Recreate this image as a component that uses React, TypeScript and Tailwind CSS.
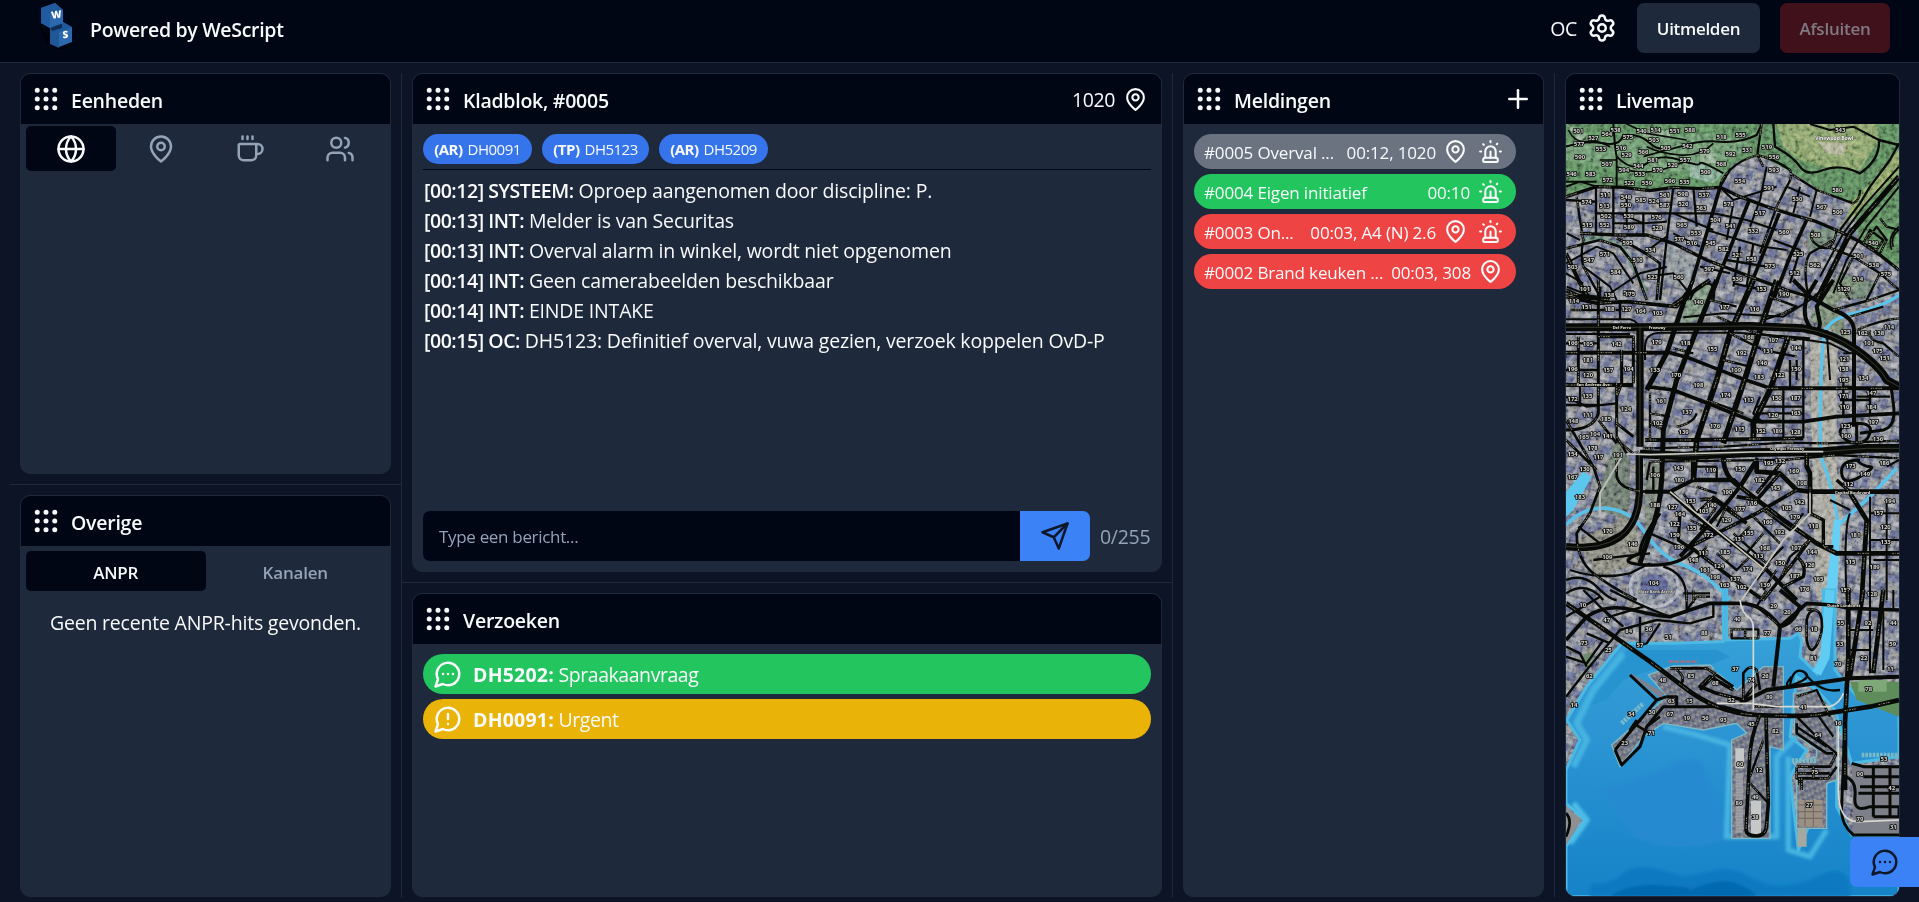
import React from "react";
import { Coffee, Globe, Grip, Plus, Settings, Siren, Users } from "lucide-react";

type IconProps = { size: number; className?: string; children?: React.ReactNode };

function Stroke({ size, className = "", children }: IconProps) {
  return (
    <svg width={size} height={size} viewBox="0 0 24 24" fill="none" stroke="currentColor" strokeWidth="2" strokeLinecap="round" strokeLinejoin="round" className={`shrink-0 ${className}`}>
      {children}
    </svg>
  );
}

const Pin = ({ size, className }: IconProps) => (
  <Stroke size={size} className={className}>
    <path d="M20 10c0 6-8 12-8 12s-8-6-8-12a8 8 0 0 1 16 0Z" />
    <circle cx="12" cy="10" r="3" />
  </Stroke>
);

const BubbleDots = ({ size, className }: IconProps) => (
  <Stroke size={size} className={className}>
    <path d="M7.9 20A9 9 0 1 0 4 16.1L2 22Z" />
    <path d="M8 12h.01M12 12h.01M16 12h.01" />
  </Stroke>
);

const BubbleAlert = ({ size, className }: IconProps) => (
  <Stroke size={size} className={className}>
    <path d="M7.9 20A9 9 0 1 0 4 16.1L2 22Z" />
    <path d="M12 8v4M12 16h.01" />
  </Stroke>
);

const Paper = ({ size, className }: IconProps) => (
  <Stroke size={size} className={className}>
    <path d="m22 2-7 20-4-9-9-4Z" />
    <path d="M22 2 11 13" />
  </Stroke>
);

function Logo() {
  return (
    <svg width="36" height="50" viewBox="0 0 36 50" className="shrink-0">
      <path d="M2 28l8 6 14-3 9 12-12 7-12-6z" fill="#000" opacity=".55" />
      <path d="M12 26l13-4 9 5v15l-13 5-9-4z" fill="#2b68ad" />
      <path d="M12 26l9 4v18l-9-4z" fill="#1f5696" />
      <path d="M14 27l11-5 9 6-13 4z" fill="#20599b" />
      <path d="M12 26l12-2v4l-10 3z" fill="#0c2344" opacity=".8" />
      <path d="M3 8L17 3l8 7v13l-13 5-9-5z" fill="#2b68ad" />
      <path d="M3 8l9 3v17l-9-5z" fill="#205a9f" />
      <path d="M3 8L17 3l8 7-13 3z" fill="#215a9c" />
      <text x="18.5" y="18" fontSize="10" fontWeight="800" fill="#fff" textAnchor="middle" transform="rotate(-8 18.5 15)" className="font-['Open_Sans',sans-serif]">W</text>
      <text x="27.5" y="38" fontSize="10" fontWeight="800" fill="#fff" textAnchor="middle" transform="rotate(-4 27.5 35)" className="font-['Open_Sans',sans-serif]">S</text>
    </svg>
  );
}

function Panel({ title, right, className = "", children }: { title: string; right?: React.ReactNode; className?: string; children?: React.ReactNode }) {
  return (
    <section className={`flex flex-col overflow-hidden rounded-[10px] border border-[#1e293b] bg-[#1e293b] ${className}`}>
      <header className="flex h-[50px] shrink-0 items-center bg-[#010615] pl-[10px] pr-[10px]">
        <Grip size={30} className="shrink-0" />
        <h2 className="ml-[10px] pt-[3px] text-[19.5px] font-semibold tracking-[-0.25px]">{title}</h2>
        <div className="ml-auto flex items-center">{right}</div>
      </header>
      {children}
    </section>
  );
}

const units = [["(AR)", "DH0091", "w-[109px]"], ["(TP)", "DH5123", "w-[107px]"], ["(AR)", "DH5209", "w-[109px]"]];

const log = [
  ["[00:12] SYSTEEM:", "Oproep aangenomen door discipline: P."],
  ["[00:13] INT:", "Melder is van Securitas"],
  ["[00:13] INT:", "Overval alarm in winkel, wordt niet opgenomen"],
  ["[00:14] INT:", "Geen camerabeelden beschikbaar"],
  ["[00:14] INT:", "EINDE INTAKE"],
  ["[00:15] OC:", "DH5123: Definitief overval, vuwa gezien, verzoek koppelen OvD-P"],
];

const calls = [
  { title: "#0005 Overval ...", info: "00:12, 1020", bg: "bg-[#6b7280]", pin: true, siren: true },
  { title: "#0004 Eigen initiatief", info: "00:10", bg: "bg-[#22c55e]", pin: false, siren: true },
  { title: "#0003 On...", info: "00:03, A4 (N) 2.6", bg: "bg-[#ef4444]", pin: true, siren: true },
  { title: "#0002 Brand keuken ...", info: "00:03, 308", bg: "bg-[#ef4444]", pin: true, siren: false },
];

/* Map road data: "width|path" */
const northRoads = [
  "8|M198 590L290 560L370 562L450 572L520 562L600 566L660 562L720 590L800 620L880 645L950 665L1020 695L1080 725L1140 765L1197 810",
  "4|M198 440Q260 420 310 430T370 405Q420 400 450 430T540 440T660 425T770 405L785 372",
  "4|M340 372Q345 450 350 470L350 560",
  "4|M350 470Q400 520 440 490T540 480T600 490T670 520",
  "3|M205 390Q225 430 260 425T330 440M440 440Q480 460 540 465T640 430M380 372L440 400L560 420",
  "3|M350 500Q430 530 500 505T570 480M300 480H350M430 470L500 450",
  "5|M785 372L772 465L790 500M772 465Q720 480 690 510T660 562",
  "5|M820 372L825 440Q880 470 900 500Q920 530 970 510T1080 520Q1140 480 1137 420L1197 435",
  "5|M772 465Q830 480 870 510Q880 530 860 560L830 620L780 760M870 520L950 570L1060 610Q1080 600 1080 570",
  "5|M1197 430L1170 480L1110 560L1080 610L1020 690",
  "14|M1197 530L1110 630L1050 700L1000 800L950 900",
  "4|M1197 500L1090 620L1030 700L960 830M1197 560L1100 680L1040 780L1000 880",
  "4|M930 372L990 390L1060 380L1137 420",
  "5|M288 562V700M288 605L198 600M288 640H640M340 562V700M430 640V710M520 562L500 720L480 900M580 562L590 680",
  "8|M240 700L350 705L440 705L520 730L620 780L750 830L860 870L960 900",
  "9|M660 562L620 700L590 800L560 900M748 600L700 720L660 820L630 900M838 640L790 760L750 860L735 900M920 660L870 770L820 900",
  "5|M230 590L240 660L250 720Q240 770 250 800L300 890",
  "4|M640 640L740 660L830 690M620 690L720 720L790 740L860 750M600 800L690 820M690 510L660 562L700 600L830 560M800 500L780 600L750 680M700 610L680 720M860 560L930 590M950 570L930 650M900 560L880 640",
  "6|M198 745L300 720L360 740L400 790L440 900M350 715Q420 745 480 790L470 900",
  "4|M198 790L290 740L340 760L400 850M200 860L300 900L420 820L500 800M250 800L330 860L350 900M430 760L500 710M440 830L520 820L560 870M198 820L250 850",
  "10|M198 870L240 890L330 900M198 760L240 850L270 900",
  "5|M570 900Q590 850 620 850T640 900M680 780L800 800M700 850L790 870M720 740L700 860M760 730L740 860M820 720L900 750L870 850",
  "5|M940 690Q920 720 960 740T1010 690M1000 720L930 760Q910 790 920 860L930 900M980 740L1060 770L1140 820L1197 870M1060 770L1020 850L1050 900M1140 820L1100 900M1100 720L1130 680L1160 720L1140 760M1090 730L1110 690L1150 720L1130 750L1090 730M1140 655L1160 680L1197 690",
  "3|M1197 690Q1170 710 1180 740M1197 680Q1160 710 1175 750",
  "4|M198 560L240 545L290 560M200 700L240 720M198 545L290 545M380 590V690M360 640L430 670L500 665M340 670H430M520 640L640 690M520 700L600 740",
];

const midRoads = [
  "9|M48 50L140 70L230 65L380 80L410 40L430 0",
  "22|M48 142H250L400 140L600 138L760 145Q850 160 920 210T1010 300L1047 320",
  "4|M48 118H240Q270 125 270 160M400 112L520 100L700 110L780 60L850 0M48 162H240M285 240V200Q285 160 330 158H560L780 175M700 170L840 190L900 220",
  "10|M800 0L770 50Q755 110 780 140T810 130L800 80L850 0M730 0L780 50L850 90Q910 110 912 150V440",
  "5|M850 90L960 60L1047 30M920 150Q990 120 1047 115M960 150Q950 180 1000 190L1047 230M900 110L1000 80",
  "13|M500 0L380 300L340 450L335 600Q330 690 300 760L270 850M410 40L350 220L290 330",
  "15|M610 0L540 160L500 300L440 480L430 600M680 0L640 120L590 280L520 490M715 170L660 330L610 430V480",
  "9|M350 215L420 235L560 290L660 325L760 325M290 320L370 330L500 380L610 425L760 425L860 410L1047 400",
  "10|M48 218H350M48 315H250M650 325H1047M285 480L420 480L760 475M370 75L480 0",
  "20|M270 140V500M268 520V640Q265 730 210 770T48 800",
  "7|M145 0V400Q130 450 48 450M85 170V310M200 310V430L250 470M145 170H250V310M215 210V310L200 350",
  "24|M270 522L400 528L600 518L820 515L950 505L1047 505",
  "5|M280 505L520 500L700 488L830 490L1047 482M300 545L520 542L700 540L860 525L1047 535M250 520L200 480V420",
  "12|M430 520V600H550L570 620L620 540V575L690 580L740 630L780 635H1047M520 530Q520 590 570 620",
  "12|M770 520V560L780 580V700M570 620L700 720L800 790L860 820H1047M900 640L950 720L935 960",
  "10|M285 635H360L430 600M360 635L430 700L640 860L740 960M570 620L480 730L390 830",
  "9|M740 630L620 700L480 770L420 800L540 890L640 960M690 580L620 660L560 650M450 660Q490 650 520 680L590 730",
  "8|M390 700L385 780L430 810Q390 860 290 855T270 820Q270 780 330 700",
  "6|M200 540V590Q210 630 285 635M200 470L230 520M145 420L200 490M48 420L130 560L150 620L120 700L80 760Q80 840 130 880T260 960M48 480L140 570",
  "7|M930 540Q870 540 875 580T930 590T960 560T920 540M870 460Q870 430 920 430T960 460T920 490T870 460M920 430V500M1020 300L1030 370Q1040 440 1000 450L930 460",
  "8|M640 960L720 860L780 780M740 830Q770 850 760 890L700 920M780 700L820 720V800L850 800M905 640L860 600M700 540L620 640",
  "5|M48 350L110 380L200 370M90 320V380M48 375H150M150 60V20M210 60V120M48 190H145M48 270H145M300 545L290 600M310 560V640M430 560H500M500 560V600M720 240V325M740 240V300M760 180V475M620 380H760M700 325V475M620 400H760M880 290V410M960 325V400M920 350H1020M870 360H960M630 350L610 400L640 430",
  "5|M48 40L140 50M60 90H210V60M660 50L740 80L700 100L640 120M480 60L560 80M500 110L620 160L740 180M370 205L430 220M300 340V480M300 400L360 410M380 440Q430 430 440 400M470 360L580 400M540 160L640 210L740 230M520 240L600 260M300 430L340 450",
  "4|M960 650V960M1010 660V960M960 700H1047M900 700Q880 740 890 960M960 780H1047M970 840H1047M1010 560L1047 540M840 660L900 690M830 150L840 300M880 220H910M880 320H910",
  "5|M400 640L440 700L490 650L560 700M440 620L500 640M420 720L500 760M500 680L450 750M530 680L500 740M600 700L690 790M640 690L720 750L760 700M550 760L650 850L700 800M600 740L540 800M640 760L590 820M500 820L560 870L600 830M470 800L430 850M660 850L620 900M680 870L640 930M780 780L720 830L690 900",
  "5|M48 900Q100 880 140 920T200 960M48 940Q110 900 160 960M60 870Q150 900 240 880L300 850M85 740L150 790L210 760M300 760L390 800M130 840L210 830L300 820M340 860Q410 880 410 960M400 940H480",
];

const southRoads = [
  "12|M48 40L150 110L300 215L400 290Q500 370 620 375T800 375L960 350L1047 330",
  "9|M48 150L110 80Q170 40 250 60T360 80L480 40H570Q640 40 690 110L770 40L850 45L900 55L1047 60",
  "12|M895 0V200L885 400V600M940 0L900 260M1000 0L970 250",
  "10|M570 340L650 300L760 285L900 265L1047 260M690 110L680 200L670 290M690 110Q730 100 750 50L690 0",
  "9|M630 375Q600 440 598 520L588 720Q590 738 620 738T650 700L655 640L648 380M620 280L580 330L500 310L450 290L480 260L550 300",
  "7|M885 400L875 650Q870 700 910 735H1047M885 560Q920 570 915 620T960 650H1047M930 590H1047M970 530V680M1020 530V680M905 520L940 530H1047M1047 650V680H970M940 560H1047M925 610H1047",
  "6|M770 60Q810 50 815 90T800 165T770 150V90Q775 60 800 60",
  "7|M195 480L320 330L350 320M320 330L240 255M195 480L215 525L270 470L290 410L340 350H520L610 375M350 320H380V350",
  "6|M740 530H840L860 490M740 530V565H835L860 530M790 530V565M735 550H840M755 565V600M748 565V585",
  "5|M720 285Q730 230 760 245T740 280T725 260M765 250Q810 310 870 300M740 380L810 450L860 490M740 410L830 470M800 370L850 440",
  "6|M360 235H470L550 290M380 240Q410 260 390 290M500 250L450 300M580 330V250Q600 220 620 240L630 300",
  "5|M48 320L110 240L210 120L320 90L420 100L490 80V40M48 200L110 220L160 150M110 130L180 160M48 170L90 190L110 230M150 50L220 110M100 0L180 80L280 50M48 80L150 20M180 0Q300 60 360 80M270 80V160M330 100L290 160L270 165",
  "5|M540 118H625V145H545V118M585 118V145M430 0V40M410 0V60L440 20L480 20M650 0L620 50L680 100M740 320L800 300L840 380M610 350H690M600 580L655 640M640 450L600 560",
  "6|M48 670Q70 690 48 740M260 390L240 420L280 380M250 400L300 430M290 410L330 380M740 400V430L830 490H850",
  "4|M960 0V250M1030 0V60M900 120H970M900 180H960M1000 60V240",
];

const northLabels =
  "235 392;347 390;384 412;467 390;524 392;570 390;280 414;321 402;462 419;425 393;237 431;363 443;303 448;240 470;380 465;430 455;497 444;562 437;614 452;665 410;722 406;692 462;742 450;664 492;321 493;415 498;459 480;518 495;555 480;372 511;420 522;473 509;617 516;215 522;272 521;388 549;441 549;510 542;554 546;323 540;316 585;378 590;423 600;462 602;494 585;549 582;612 585;260 605;314 617;378 615;494 616;550 613;604 624;318 648;386 648;470 650;262 674;314 676;387 680;472 684;546 674;646 660;692 678;686 612;780 640;720 542;807 564;892 598;965 620;1013 636;1021 390;1012 570;801 440;822 471;822 511;760 694;852 695;947 706;632 729;671 746;712 764;755 776;383 728;451 750;315 762;413 780;267 780;347 816;458 832;536 832;628 808;712 838;810 798;884 820;784 868;852 884;895 762;945 796;1075 768;1122 795;1158 822;1074 838;1028 868;328 886;385 880;256 868;218 800;1120 730;538 718;576 730;588 700";
const midLabels =
  "105 27;178 46;240 42;72 62;110 80;178 88;229 88;272 93;323 100;445 65;524 80;613 88;634 26;702 42;886 28;68 190;114 192;200 192;320 186;406 188;487 208;575 218;654 214;597 170;670 180;738 203;114 240;114 284;175 270;236 267;315 270;378 284;558 269;636 250;627 292;689 286;738 267;68 268;112 348;68 356;114 404;70 424;168 416;228 388;334 363;445 315;411 395;527 345;596 360;680 353;737 353;669 404;737 400;323 430;401 455;495 438;569 446;632 452;682 452;737 455;102 470;135 462;173 468;128 504;145 532;68 522;204 526;104 568;68 590;315 586;385 564;388 600;483 570;570 568;656 548;690 544;732 572;756 608;676 625;629 600;883 238;881 268;881 300;940 294;881 348;883 382;964 340;964 380;886 438;888 468;970 426;984 476;902 558;895 612;945 582;1003 548;886 156;938 160;957 190;987 160;983 212;1017 140;1004 235;315 675;368 680;390 703;461 693;485 674;570 688;606 668;422 662;532 636;529 720;653 726;710 684;748 667;735 712;790 738;596 758;688 756;568 776;645 804;738 804;786 816;916 765;1007 742;985 698;1020 664;1007 786;173 753;172 830;248 792;90 652;374 733;374 765;387 800;424 744;475 766;460 820;430 840;525 817;507 858;465 870;495 890;555 896;592 866;625 828;690 850;734 888;779 856;524 916;575 920;645 916;763 926;901 846;886 930;974 860;966 942;805 898;311 908";
const southLabels =
  "98 46;170 90;236 122;296 116;103 158;175 180;118 258;72 345;355 142;463 130;562 88;652 128;671 48;745 118;792 118;872 100;954 100;1030 98;790 204;870 162;864 222;942 204;1028 162;1021 236;338 270;423 258;556 236;604 270;646 258;364 332;418 332;544 330;658 320;760 350;956 296;306 366;360 372;410 384;466 384;520 390;604 402;676 424;244 372;304 430;224 458;570 522;627 540;616 622;567 640;616 682;794 546;778 646;804 436;864 400;1002 508;930 552;1025 594;930 688;1030 712;496 280;712 66;270 166";

function Labels({ data, start }: { data: string; start: number }) {
  return (
    <g fontSize="18" fontWeight="700" fill="#d9d9d4" stroke="#0b0b0b" strokeWidth="5" paintOrder="stroke" textAnchor="middle" className="font-['Open_Sans',sans-serif]">
      {data.split(";").map((p, i) => {
        const [x, y] = p.split(" ").map(Number);
        return <text key={i} x={x} y={y + 6}>{start < 100 ? 10 + ((i * 37) % 85) : start + ((i * 37) % 98)}</text>;
      })}
    </g>
  );
}

function Roads({ data }: { data: string[] }) {
  return (
    <g fill="none" strokeLinejoin="round">
      {data.map((r, i) => {
        const [w, d] = r.split("|");
        return <path key={i} d={d} stroke="#080a07" strokeWidth={Number(w) + 2} />;
      })}
      {data.map((r, i) => {
        const [w, d] = r.split("|");
        const n = Number(w);
        if (n >= 20) return <path key={i} d={d} stroke="#6d6e5e" strokeWidth="1.4" />;
        if (n >= 5 && i % 2 === 0) return <path key={i} d={d} stroke="#aaa78e" strokeWidth="2.5" strokeDasharray="5 3 2 4 6 3 4 2 5 70" />;
        return null;
      })}
    </g>
  );
}

function LiveMap() {
  return (
    <svg viewBox="1566 124 333 772" preserveAspectRatio="none" className="block min-h-0 w-full flex-1">
      <defs>
        <pattern id="blocks" width="31" height="27" patternUnits="userSpaceOnUse" patternTransform="rotate(14)">
          <rect width="31" height="27" fill="#7b7f89" />
          <path d="M1 1h7v6H1zM20 10h8v5h-8zM10 20h6v5h-6z" fill="#9b9ca3" />
          <path d="M10 2h8v9h-8zM1 12h6v10H1zM19 18h10v7H19z" fill="#5f6584" />
          <path d="M22 2h6v5h-6zM10 13h6v4h-6z" fill="#8d8a84" />
          <path d="M0 9h31M18 0v27" stroke="#42464f" strokeWidth=".8" />
        </pattern>
        <linearGradient id="sea" x1="0" y1="0" x2="0" y2="1">
          <stop offset="0" stopColor="#3aa5da" />
          <stop offset=".45" stopColor="#2d95d3" />
          <stop offset="1" stopColor="#1583c8" />
        </linearGradient>
        <filter id="grain" x="0" y="0" width="100%" height="100%">
          <feTurbulence type="fractalNoise" baseFrequency=".22" numOctaves="3" seed="4" />
          <feColorMatrix values="1.6 0 0 0 -.35  1.6 0 0 0 -.35  1.5 0 0 0 -.3  0 0 0 0 1" />
        </filter>
        <filter id="soft" x="-5%" y="-5%" width="110%" height="110%">
          <feGaussianBlur stdDeviation="5" />
        </filter>
      </defs>
      <rect x="1566" y="124" width="333" height="772" fill="url(#blocks)" />

      <g transform="translate(1500 0) scale(.33333)">
        <path d="M198 372H1197V800L1075 720L1060 610L960 570L880 520L780 468L700 490L660 560L450 570L290 555L198 590Z" fill="#567d57" />
        <path d="M830 372H1130L1137 420L1080 510L970 500L900 480L850 440Z" fill="#7c9562" />
        <path d="M880 400L960 440L930 480M990 390L1010 470M1080 400L1040 450L1100 470" stroke="#a3ab74" strokeWidth="7" fill="none" opacity=".6" />
        <path d="M955 425L1040 430L1030 465L980 460Z" fill="#a9ac8f" />
        <path d="M198 430L340 420L640 400L760 430L650 510L400 520L198 480Z" fill="#6f9470" opacity=".7" />
        <path d="M1197 520L1090 620L1020 690L1060 600L1120 540L1197 450Z" fill="#7f965f" />
        <path d="M570 480L670 520L640 550L570 530Z" fill="#7ca38b" />
        <path d="M200 372l60 30l-20 30zM430 390h80v20h-80zM600 460h50v30h-50z" fill="#9db59a" opacity=".6" />
        <path d="M920 700Q1010 660 1010 720L930 760ZM1020 820L960 890L1090 900L1130 850Z" fill="#68796c" />
        <path d="M500 740L590 780L560 860L500 850Z" fill="#7f898c" />
        <path d="M250 720Q330 700 380 760L440 880" stroke="#667f73" strokeWidth="14" fill="none" />
      </g>

      <g transform="translate(1550 280) scale(.33333)">
        <path d="M200 470L240 540V650L230 720L120 680L150 620Z" fill="#657066" />
        <path d="M285 540L350 560L320 700L285 760Z" fill="#70786f" />
        <path d="M80 780L260 700L270 850L140 890Z" fill="#7c7c74" />
        <path d="M780 180H860V560L880 720L860 960H800L790 700Z" fill="#9b9a90" />
        <path d="M410 60Q450 -10 490 20L440 120L390 130Z" fill="#728774" />
        <path d="M780 120L900 180L860 70L940 0H840Z" fill="#717f6c" />
        <ellipse cx="313" cy="920" rx="72" ry="60" fill="#7d8290" stroke="#a5a8b2" strokeWidth="9" />
        <ellipse cx="313" cy="915" rx="42" ry="32" fill="#565d83" />
      </g>

      <rect x="1566" y="124" width="333" height="772" filter="url(#grain)" opacity=".42" className="mix-blend-overlay" />

      <g transform="translate(1550 280) scale(.33333)">
        <path d="M48 635L100 575L125 590L70 690L48 710Z" fill="#5bc6ee" />
        <path d="M48 735Q100 680 170 685T280 750Q330 830 400 855T540 960" stroke="#5bbfe6" strokeWidth="11" fill="none" />
        <path d="M1047 45Q1000 80 910 100T820 180Q808 300 812 530Q850 620 865 740" stroke="#5bc4ec" strokeWidth="10" fill="none" />
        <path d="M1040 565L960 650L865 735" stroke="#5bc4ec" strokeWidth="11" fill="none" />
        <path d="M852 720H872L860 960H825Z" fill="#66cff5" />
      </g>

      <g transform="translate(1550 590) scale(.33333)">
        <path d="M820 0H855V240L930 330L1047 370V500L905 520L880 440L855 360L800 300L740 260L720 440L770 480L720 560L745 780L780 700L810 710L830 570H860V650L905 735L1047 740V920H48V770L105 690L48 640V540L90 450L50 390L110 290L215 160L370 160L520 155V0H530V150L720 145L745 130L755 150L750 200L800 250L820 180Z" fill="url(#sea)" stroke="#4dbae3" strokeWidth="9" />
        <path d="M840 0L825 200L800 250" stroke="#5fcdf3" strokeWidth="28" fill="none" />
        <path d="M230 180L500 180L540 200L480 225L330 230L220 270L170 330L110 350Z" fill="#2794d0" />
        <g filter="url(#soft)">
          <path d="M120 880Q180 890 220 850T400 860Q450 850 500 840T620 870T800 860T900 920H120Z" fill="#0d79c1" />
          <path d="M180 920Q230 880 330 885T420 900Q510 860 560 880T620 920Z" fill="#0669b0" />
          <path d="M150 600Q300 560 380 520T470 560L540 740Q400 800 250 740Z" fill="#278ad1" />
          <path d="M60 760L110 690L70 640" stroke="#4dbde6" strokeWidth="18" fill="none" />
          <path d="M70 530L110 450L80 400L130 300L220 190" stroke="#45b3e0" strokeWidth="20" fill="none" />
          <path d="M340 410L440 435L540 465L530 740H680V500L740 440M715 500V780L780 800L830 720" stroke="#46b4e2" strokeWidth="16" fill="none" />
        </g>
        <path d="M295 255L370 228L480 225L560 300L640 230H700V480L660 470V745H545V450L590 430L560 400L460 420L340 400L280 440L210 530L185 465L350 320Z" fill="url(#blocks)" stroke="#7fb9c6" strokeWidth="4" />
        <path d="M500 225L560 255L550 280L490 240Z" fill="#2f9ed6" />
        <path d="M240 248L345 310L330 325L250 260Z" fill="#7d8290" />
        <path d="M730 310L800 300L860 400V570L830 580V715H740V530L730 520L800 500V480L735 430Z" fill="url(#blocks)" stroke="#7fb9c6" strokeWidth="4" />
        <path d="M742 715H770V770H742Z" fill="#a5a89e" />
        <path d="M48 650L95 690L48 765Z" fill="#8d8f93" />
        <path d="M900 275H1047V380L920 330Z" fill="#5f8c5b" />
        <path d="M925 270H1010V305H925Z" fill="#7ea878" />
        <path d="M905 525H1047V735H910Z" fill="#7e8089" />
        <path d="M355 215H445" stroke="#a9707f" strokeWidth="7" strokeDasharray="14 4" />
        <path d="M556 475h26v60h-26zM603 632h30v100h-30z" fill="#c5c8c6" />
        <path d="M568 550V730" stroke="#9fa1a4" strokeWidth="22" strokeDasharray="7 2" />
        <path d="M746 630h72v80h-72z" fill="#9c8f83" />
        <path d="M746 645h72M746 665h72M746 685h72M765 630v80M790 630v80" stroke="#6d675f" strokeWidth="3" />
        <path d="M725 512H800M935 495H1047M215 400L280 340" stroke="#7cb9c6" strokeWidth="14" strokeDasharray="8 3" />
        <path d="M90 200L140 180L110 240Z" fill="#6d8b69" />
      </g>

      <g transform="translate(1500 0) scale(.33333)">
        <Roads data={northRoads} />
        <Labels data={northLabels} start={501} />
        <text x="1003" y="420" fontSize="15" fontWeight="700" fill="#fff" stroke="#333" strokeWidth="2" paintOrder="stroke" textAnchor="middle" className="font-['Open_Sans',sans-serif]">Vinewood Bowl</text>
      </g>
      <g transform="translate(1550 280) scale(.33333)">
        <Roads data={midRoads} />
        <path d="M230 522L300 524L600 516L820 515" stroke="#c9cac4" strokeWidth="5" fill="none" />
        <path d="M360 635L640 865M575 960L700 780L780 700V640" stroke="#c9c7ba" strokeWidth="5" fill="none" />
        <path d="M215 530L150 640V710" stroke="#b7bab6" strokeWidth="6" fill="none" />
        <Labels data={midLabels} start={101} />
        <g fontSize="12" fontWeight="700" fill="#e8e6d8" stroke="#111" strokeWidth="2" paintOrder="stroke" className="font-['Open_Sans',sans-serif]">
          <text x="188" y="146">Del Perro</text>
          <text x="296" y="146">Freeway</text>
          <text x="660" y="509">Olympic Freeway</text>
          <text x="855" y="643">Capital Boulevard</text>
          <text x="265" y="940">Maze Bank Arena</text>
          <text x="80" y="318">San Andreas Ave</text>
        </g>
      </g>
      <g transform="translate(1550 590) scale(.33333)">
        <Roads data={southRoads} />
        <path d="M570 30Q575 70 600 85Q610 95 610 120V360M500 340H600L680 350H840Q870 340 880 310M865 400V600Q865 700 930 695L1047 690" stroke="#d9d9d2" strokeWidth="5" fill="none" />
        <Labels data={southLabels} start={10} />
        <text x="832" y="50" fontSize="12" fontWeight="700" fill="#e8e6d8" stroke="#111" strokeWidth="2" paintOrder="stroke" className="font-['Open_Sans',sans-serif]">Dutch London St</text>
      </g>
    </svg>
  );
}

export default function App() {
  return (
    <div className="flex h-[902px] w-full flex-col overflow-hidden bg-[#0d1425] font-['Open_Sans','Noto_Sans',sans-serif] text-slate-50">
      <div className="flex h-[63px] shrink-0 items-start border-b border-[#1e293b] bg-[#010615] pl-[38px] pr-[29px]">
        <Logo />
        <h1 className="ml-[16px] mt-[13px] text-[19.5px] font-semibold leading-[33px] tracking-[-0.3px]">Powered by WeScript</h1>
        <div className="ml-auto mt-[3px] flex h-[50px] items-center">
          <span className="pt-px text-[19.5px] tracking-[-0.3px]">OC</span>
          <Settings size={30} className="ml-[10px]" />
          <button className="ml-[20px] h-[50px] w-[123px] rounded-[7px] bg-[#1e293b] pt-[2px] text-[17px] font-semibold tracking-[-0.3px]">Uitmelden</button>
          <button className="ml-[20px] h-[50px] w-[110px] rounded-[7px] bg-[#40111a] pt-[2px] text-[17px] font-semibold tracking-[-0.25px] text-[#7f7a83]">Afsluiten</button>
        </div>
      </div>

      <main className="flex h-[834px] shrink-0 pl-[10px] pr-[19px] pt-[10px]">
        <div className="flex w-[392px] flex-col border-r border-[#1e293b]">
          <Panel title="Eenheden" className="mx-[10px] h-[401px]">
            <div className="grid grid-cols-[90px_89px_90px_90px] px-[5px] pt-[2px]">
              <div className="flex h-[45px] items-center justify-center rounded-[5px] bg-[#010615]"><Globe size={30} /></div>
              <div className="flex h-[45px] items-center justify-center text-[#94a3b8]"><Pin size={30} /></div>
              <div className="flex h-[45px] items-center justify-center text-[#94a3b8]"><Coffee size={30} /></div>
              <div className="flex h-[45px] items-center justify-center text-[#94a3b8]"><Users size={30} /></div>
            </div>
          </Panel>
          <div className="my-[10px] h-px shrink-0 bg-[#1e293b]" />
          <Panel title="Overige" className="mx-[10px] min-h-0 flex-1">
            <div className="grid grid-cols-2 px-[5px] pt-[5px] text-center text-[17px] font-semibold leading-[43px] tracking-[-0.2px]">
              <div className="h-[40px] rounded-[5px] bg-[#010615]">ANPR</div>
              <div className="h-[40px] text-[#94a3b8]">Kanalen</div>
            </div>
            <p className="mt-[16px] whitespace-nowrap text-center text-[19.5px] leading-[31px] tracking-[-0.2px]">Geen recente ANPR-hits gevonden.</p>
          </Panel>
        </div>

        <div className="flex w-[771px] flex-col border-r border-[#1e293b]">
          <Panel title="Kladblok, #0005" className="mx-[10px] h-[499px]" right={<><span className="pt-[2px] text-[19.5px] tracking-[-0.4px]">1020</span><Pin size={25} className="ml-[8px] mr-[3px]" /></>}>
            <div className="flex min-h-0 flex-1 flex-col px-[10px] pb-[10px] pt-[10px]">
              <div className="flex gap-[10px] border-b border-[#010615] pb-[5px]">
                {units.map(([role, id, w]) => (
                  <span key={id} className={`flex h-[30px] items-center justify-center whitespace-nowrap rounded-full bg-[#3574ea] text-[15px] tracking-[-0.5px] ${w}`}>
                    <b className="mr-[5px]">{role}</b>{id}
                  </span>
                ))}
              </div>
              <div className="flex-1 pl-px pt-[6px] text-[19.5px] leading-[30px] tracking-[-0.18px]">
                {log.map(([who, text], i) => (
                  <p key={i} className="whitespace-nowrap"><b className="font-semibold tracking-[-0.45px]">{who}</b> {text}</p>
                ))}
              </div>
              <div className="flex h-[50px] shrink-0 items-center">
                <div className="flex h-full w-[597px] items-center rounded-l-[7px] bg-[#010615] pl-[16px] pt-[2px] text-[17px] tracking-[-0.32px] text-[#94a3b8]">Type een bericht...</div>
                <button className="flex h-full w-[70px] items-center justify-center rounded-r-[7px] bg-[#3b82f6] text-slate-900"><Paper size={30} /></button>
                <span className="ml-[10px] pt-[2px] text-[19.5px] tracking-[-0.3px] text-[#94a3b8]">0/255</span>
              </div>
            </div>
          </Panel>
          <div className="my-[10px] h-px shrink-0 bg-[#1e293b]" />
          <Panel title="Verzoeken" className="mx-[10px] min-h-0 flex-1">
            <div className="flex flex-col gap-[5px] p-[10px] text-[19.5px] tracking-[-0.45px]">
              <div className="flex h-[40px] items-center rounded-full bg-[#22c55e] pl-[10px]"><BubbleDots size={30} /><span className="ml-[10px] pt-[2px]"><b className="tracking-[0.2px]">DH5202:</b> Spraakaanvraag</span></div>
              <div className="flex h-[40px] items-center rounded-full bg-[#eab308] pl-[10px]"><BubbleAlert size={30} /><span className="ml-[10px] pt-[2px]"><b className="tracking-[0.2px]">DH0091:</b> Urgent</span></div>
            </div>
          </Panel>
        </div>

        <div className="flex w-[382px] flex-col border-r border-[#1e293b]">
          <Panel title="Meldingen" className="mx-[10px] min-h-0 flex-1" right={<Plus size={30} />}>
            <div className="flex w-[342px] flex-col gap-[5px] px-[10px] pt-[10px] text-[17px] tracking-[-0.15px]">
              {calls.map((c) => (
                <div key={c.title} className={`flex h-[35px] items-center whitespace-nowrap rounded-full pl-[10px] pr-[13px] ${c.bg}`}>
                  <span className="pt-[2px]">{c.title}</span>
                  <span className="ml-auto pt-[2px]">{c.info}</span>
                  {c.pin && <Pin size={25} className={c.siren ? "ml-[7px] mr-[2px]" : "ml-[7px]"} />}
                  {c.siren && <Siren size={25} className="ml-[8px] shrink-0" />}
                </div>
              ))}
            </div>
          </Panel>
        </div>

        <Panel title="Livemap" className="ml-[10px] min-w-0 flex-1">
          <LiveMap />
        </Panel>
      </main>

      <button className="absolute left-[1850px] top-[837px] flex h-[50px] w-[69px] items-center justify-center rounded-l-[7px] bg-[#3b82f6] text-slate-900">
        <BubbleDots size={30} />
      </button>
    </div>
  );
}
